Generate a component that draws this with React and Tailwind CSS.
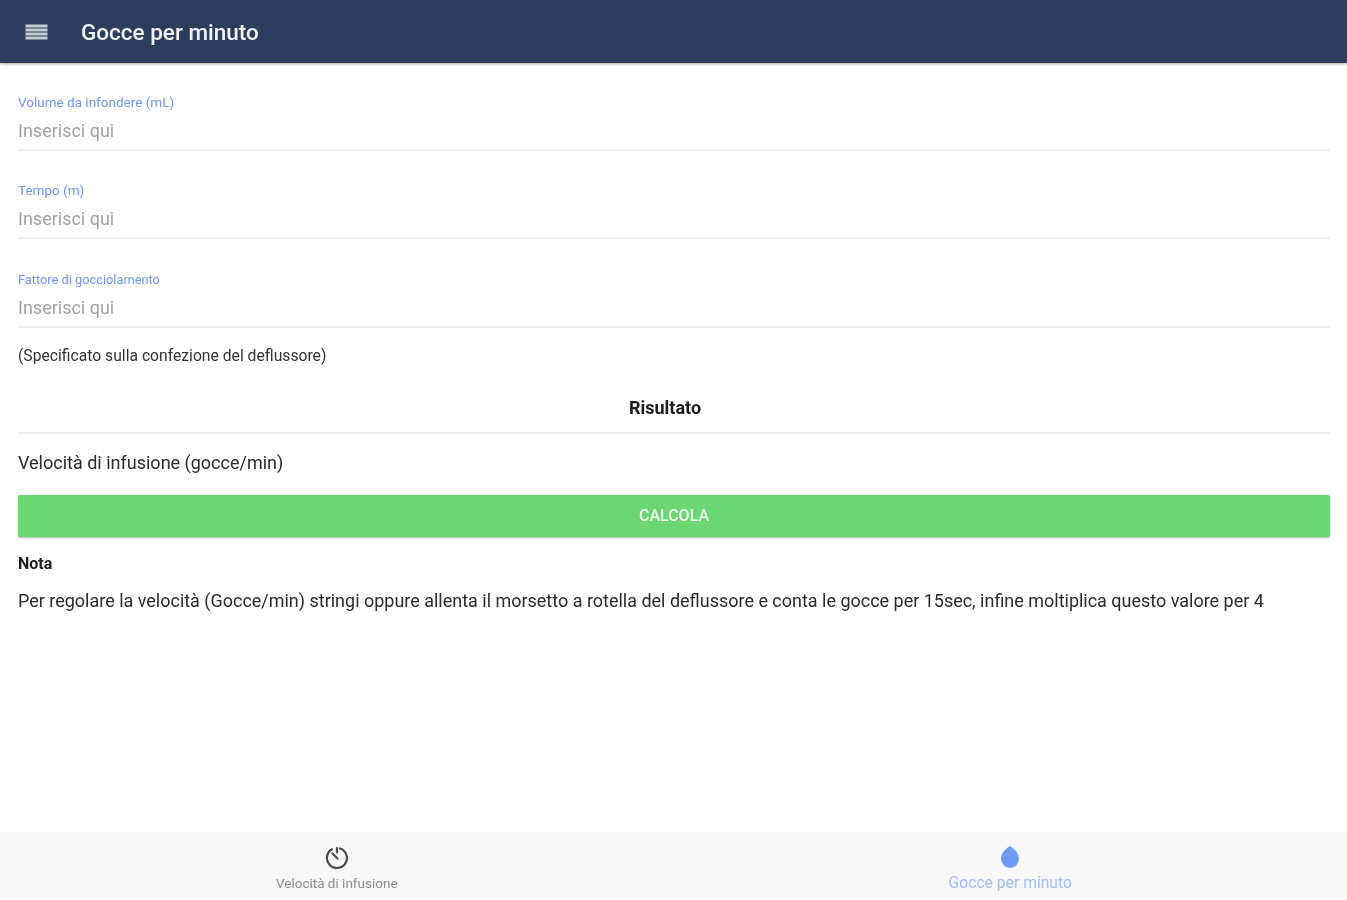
function Field({ label, labelClass = "text-[13.5px] leading-[14px]", className = "" }) {
  return (
    <div className={`flex flex-col border-b-2 border-[#f0f0f0] h-[56px] shrink-0 ${className}`}>
      <span className={`${labelClass} text-[#6f96f5]`}>{label}</span>
      <span className="mt-auto mb-[7px] text-[18px] leading-[23px] text-[#a3a3a3]">Inserisci qui</span>
    </div>
  );
}

export default function App() {
  return (
    <div className="flex flex-col h-[900px] bg-white overflow-hidden font-['Roboto',sans-serif] blur-[0.6px]">
      <header className="flex items-center h-[63px] bg-[#2c3e5d] shadow-[0_1px_3px_rgba(0,0,0,0.35)] pl-[25px] shrink-0">
        <svg width="23" height="16" viewBox="0 0 23 16" fill="#c6cbd3">
          <rect x="0.5" y="0.5" width="22" height="3" />
          <rect x="0.5" y="4.500" width="22" height="3" />
          <rect x="0.5" y="8.500" width="22" height="3" />
          <rect x="0.5" y="12.500" width="22" height="3" />
        </svg>
        <span className="ml-[33px] mt-[2px] text-[22.5px] font-medium text-[#f2f3f5]">Gocce per minuto</span>
      </header>

      <main className="flex-1 flex flex-col pl-[18px] pr-[17px] pt-[32px]">
        <Field label="Volume da infondere (mL)" />
        <Field label="Tempo (m)" className="mt-[32px]" />
        <Field label="Fattore di gocciolamento" labelClass="text-[12.8px] leading-[16px]" className="mt-[33px]" />
        <p className="mt-[17px] text-[15.7px] leading-[21px] text-[#333333]">(Specificato sulla confezione del deflussore)</p>
        <div className="mt-[31px] pb-[14px] border-b-2 border-[#f0f0f0] text-center pr-[18px]">
          <span className="block text-[18px] leading-[21px] font-bold text-[#1c1c1c]">Risultato</span>
        </div>
        <p className="mt-[17px] text-[18px] leading-[23px] text-[#2b2b2b]">Velocità di infusione (gocce/min)</p>
        <button className="mt-[21px] h-[42px] w-full shrink-0 rounded-[2px] bg-[#6bd672] shadow-[0_1px_2px_rgba(0,0,0,0.3)] text-[16px] font-medium text-[#f1fbf2]">
          CALCOLA
        </button>
        <p className="mt-[16px] text-[16px] leading-[21px] font-bold text-[#1c1c1c]">Nota</p>
        <p className="mt-[15px] text-[17.98px] leading-[23px] text-[#2b2b2b]">
          Per regolare la velocità (Gocce/min) stringi oppure allenta il morsetto a rotella del deflussore e conta le gocce per 15sec, infine moltiplica questo valore per 4
        </p>
      </main>

      <nav className="grid grid-cols-2 h-[66px] mb-[2px] bg-[#f7f7f7] shrink-0">
        <div className="flex flex-col items-center pt-[14px]">
          <svg width="24" height="24" viewBox="0 0 24 24" fill="none" stroke="#4a4a4a" strokeWidth="2.200" strokeLinecap="round">
            <path d="M15 2.500A10 10 0 1 1 7 3.300" />
            <path d="M12 2v4.500M12.500 12.500 7.500 7.500" />
          </svg>
          <span className="mt-[5px] text-[13.5px] leading-[16px] text-[#8d8d8d]">Velocità di infusione</span>
        </div>
        <div className="flex flex-col items-center pt-[13px]">
          <svg width="24" height="24" viewBox="0 0 24 24" fill="#6f9bf7">
            <path d="M12 1C16 3.500 21 8.500 21 13.500a9 9.500 0 0 1-18 0C3 8.500 8 3.500 12 1Z" />
          </svg>
          <span className="mt-[6px] text-[15.7px] leading-[16px] text-[#a5c0f8]">Gocce per minuto</span>
        </div>
      </nav>
    </div>
  );
}
